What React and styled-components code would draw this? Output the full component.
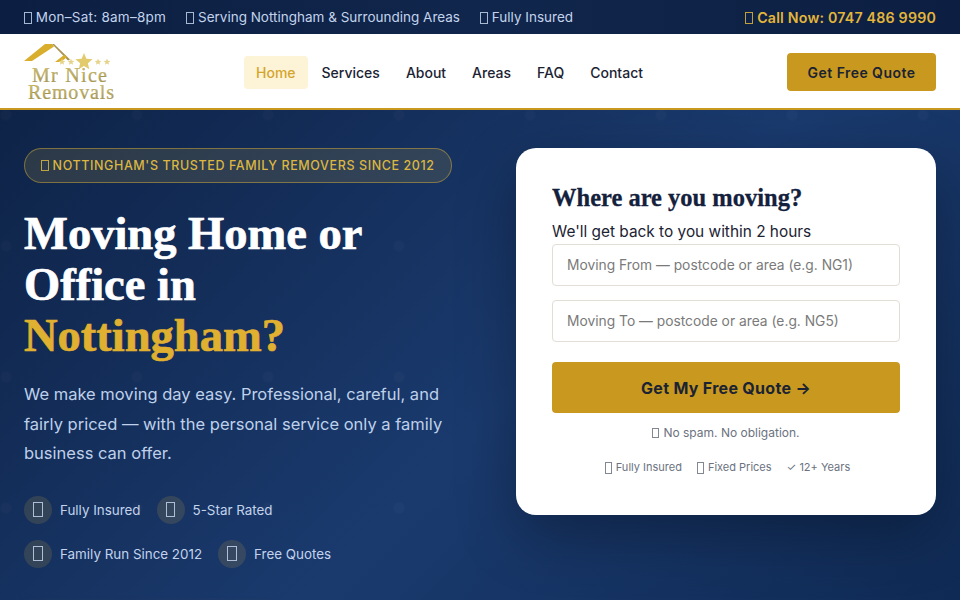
import styled, { createGlobalStyle } from "styled-components";

const GlobalStyle = createGlobalStyle`
  * { box-sizing: border-box; }
  html, body { margin: 0; padding: 0; height: 600px; overflow: hidden; }
  body { font-family: "Inter", "Liberation Sans", sans-serif; color: #14213d; }
`;

// the page's emoji show as empty "missing glyph" boxes
const Glyph = styled.span`
  display: inline-block;
  width: 0.58em;
  height: 0.85em;
  margin-right: ${(p) => (p.$bare ? "0" : "4px")};
  vertical-align: -0.12em;
  border: 1px solid currentColor;
  opacity: 0.85;
`;

const SmallGlyph = styled(Glyph)`
  width: 7px;
  height: 12px;
  vertical-align: -3px;
`;

const TopBar = styled.div`
  height: 34px;
  padding: 0 24px;
  display: flex;
  align-items: center;
  justify-content: space-between;
  background: linear-gradient(90deg, #0c1f42, #11264c 50%, #0c1f42);
  font-size: 13.5px;
  color: #c3d3ec;
`;

const TopLeft = styled.div`
  display: flex;
  gap: 20px;
`;

const TopItem = styled.span`
  letter-spacing: ${(p) => (p.$spread ? "0.25px" : "0")};
`;

const Phone = styled.span`
  color: #e3b53a;
  font-size: 14.2px;
  font-weight: 600;
  letter-spacing: 0.2px;
`;

const Nav = styled.nav`
  height: 76px;
  padding: 2px 24px 0;
  display: flex;
  align-items: center;
  justify-content: space-between;
  background: #fff;
  border-bottom: 2px solid #c9991f;
`;

const Logo = styled.svg`
  width: 92px;
  height: 60px;
  display: block;
`;

const Links = styled.div`
  display: flex;
  gap: 2px;
  margin-right: 4px;
`;

const NavLink = styled.a`
  height: 33px;
  padding: 0 12px;
  display: flex;
  align-items: center;
  border-radius: 4px;
  font-size: 14px;
  font-weight: 500;
  color: ${(p) => (p.$active ? "#d4a52c" : "#1b2333")};
  background: ${(p) => (p.$active ? "#fdf3d7" : "transparent")};
`;

const NavButton = styled.a`
  height: 38px;
  width: 149px;
  display: flex;
  align-items: center;
  justify-content: center;
  border-radius: 4px;
  background: #c9991f;
  color: #1b2333;
  font-size: 14px;
  font-weight: 600;
  letter-spacing: 0.45px;
`;

const Hero = styled.section`
  height: 490px;
  padding: 38px 24px 0;
  display: grid;
  grid-template-columns: 428px 420px;
  justify-content: space-between;
  align-items: start;
  overflow: hidden;
  background-color: #14305f;
  background-image:
    radial-gradient(circle, rgba(255, 255, 255, 0.018) 0 5px, transparent 6px),
    linear-gradient(135deg, #0e2347 0%, #1a3a6e 55%, #0f2a54 100%);
  background-size: 131px 131px, 100% 100%;
  background-position: -59.5px -60.5px, 0 0;
`;

const Badge = styled.div`
  height: 35px;
  display: flex;
  align-items: center;
  justify-content: center;
  border: 1px solid rgba(227, 181, 58, 0.45);
  border-radius: 18px;
  background: rgba(227, 181, 58, 0.14);
  color: #dcb640;
  font-size: 12.5px;
  font-weight: 500;
  letter-spacing: 0.6px;
  white-space: nowrap;
`;

const Title = styled.h1`
  margin: 25px 0 0;
  font-family: "Liberation Serif", serif;
  font-size: 46.5px;
  font-weight: 700;
  line-height: 51px;
  color: #fff;
  -webkit-text-stroke: 0.7px currentColor;
`;

const Gold = styled.span`
  display: block;
  color: #e0b030;
`;

const Lead = styled.p`
  margin: 19px 0 0;
  font-size: 16.5px;
  line-height: 29.5px;
  color: #bfd0ea;
`;

const Perks = styled.div`
  margin-top: 27px;
  display: flex;
  flex-wrap: wrap;
  gap: 16px;
`;

const Perk = styled.div`
  display: flex;
  align-items: center;
  gap: 8px;
  font-size: 13.4px;
  color: #c3d3ec;
`;

const PerkIcon = styled.span`
  width: 28px;
  height: 28px;
  display: flex;
  align-items: center;
  justify-content: center;
  border-radius: 50%;
  background: rgba(227, 181, 58, 0.15);
  font-size: 17px;
`;

const HeroButton = styled.div`
  margin-top: 39px;
  width: 250px;
  height: 50px;
  border-radius: 4px;
  background: #c9991f;
  box-shadow: 0 2px 12px rgba(201, 153, 31, 0.35);
`;

const Card = styled.form`
  height: 367px;
  padding: 36px 36px 0;
  border-radius: 20px;
  background: #fff;
  box-shadow: 0 20px 60px rgba(0, 0, 0, 0.3);
`;

const CardTitle = styled.h2`
  margin: 0;
  font-family: "Liberation Serif", serif;
  font-size: 24.5px;
  font-weight: 700;
  line-height: 28px;
  color: #14213d;
  -webkit-text-stroke: 0.3px currentColor;
`;

const CardSub = styled.p`
  margin: 10px 0 2px;
  font-size: 15.4px;
  line-height: 20px;
  color: #1b2333;
`;

const Field = styled.input`
  display: block;
  width: 100%;
  height: 42px;
  margin-bottom: 14px;
  padding: 0 14px;
  border: 1px solid #e2ded6;
  border-radius: 4px;
  background: #fff;
  font: 13.8px "Inter", sans-serif;
  outline: none;
  &::placeholder { color: #7a7a7a; opacity: 1; }
`;

const Submit = styled.button`
  display: block;
  width: 100%;
  height: 51px;
  margin-top: 20px;
  border: 0;
  border-radius: 4px;
  background: #c9991f;
  color: #1b2333;
  font: 700 16px "Inter", sans-serif;
  letter-spacing: 0.3px;
`;

const Note = styled.p`
  margin: 12px 0 0;
  text-align: center;
  font-size: 12px;
  line-height: 16px;
  color: #6b7280;
`;

const TrustRow = styled.div`
  margin-top: 18px;
  padding-left: 3px;
  display: flex;
  justify-content: center;
  gap: 15px;
  font-size: 11px;
  line-height: 16px;
  color: #6b7280;
`;

const perks = ["Fully Insured", "5-Star Rated", "Family Run Since 2012", "Free Quotes"];

// star polygon centred on cx, cy
function Star({ cx, cy, r, fill }) {
  const points = [];
  for (let i = 0; i < 10; i++) {
    const radius = i % 2 ? r * 0.45 : r;
    const angle = -Math.PI / 2 + (i * Math.PI) / 5;
    points.push(`${cx + radius * Math.cos(angle)},${cy + radius * Math.sin(angle)}`);
  }
  return <polygon points={points.join(" ")} fill={fill} />;
}

function LogoMark() {
  return (
    <Logo viewBox="0 0 92 60">
      <defs>
        <linearGradient id="logoGold" x1="0" y1="0" x2="0" y2="1">
          <stop offset="0" stopColor="#d6c572" />
          <stop offset="0.55" stopColor="#bdae60" />
          <stop offset="1" stopColor="#9c8e4c" />
        </linearGradient>
      </defs>
      <path d="M0 19 L21 2 L28 2 L30 4.5 L8 19 Z" fill="#d9ae2c" />
      <path d="M28 2 L30 2 L46 17.5 L44 18.5 Z" fill="#a89250" />
      <path d="M31 20 L40 13 L43 15 L37 20 Z" fill="#d9ae2c" />
      <Star cx={60} cy={20} r={9} fill="#e2cb6c" />
      <Star cx={38} cy={20} r={3.5} fill="#e6d388" />
      <Star cx={47} cy={20} r={3.5} fill="#e6d388" />
      <Star cx={74} cy={20} r={3.5} fill="#e6d388" />
      <Star cx={83} cy={20} r={3.5} fill="#e6d388" />
      <text x="8" y="39.5" textLength="75" lengthAdjust="spacing" fontFamily="Liberation Serif, serif" fontSize="20" fill="url(#logoGold)" stroke="#8f8240" strokeWidth="0.2">Mr Nice</text>
      <text x="4" y="56.5" textLength="86" lengthAdjust="spacing" fontFamily="Liberation Serif, serif" fontSize="20" fill="url(#logoGold)" stroke="#8f8240" strokeWidth="0.2">Removals</text>
    </Logo>
  );
}

export default function App() {
  return (
    <>
      <GlobalStyle />
      <TopBar>
        <TopLeft>
          <TopItem $spread><Glyph />Mon–Sat: 8am–8pm</TopItem>
          <TopItem><Glyph />Serving Nottingham &amp; Surrounding Areas</TopItem>
          <TopItem><Glyph />Fully Insured</TopItem>
        </TopLeft>
        <Phone><Glyph />Call Now: 0747 486 9990</Phone>
      </TopBar>
      <Nav>
        <LogoMark />
        <Links>
          <NavLink $active>Home</NavLink>
          <NavLink>Services</NavLink>
          <NavLink>About</NavLink>
          <NavLink>Areas</NavLink>
          <NavLink>FAQ</NavLink>
          <NavLink>Contact</NavLink>
        </Links>
        <NavButton>Get Free Quote</NavButton>
      </Nav>
      <Hero>
        <div>
          <Badge><Glyph />NOTTINGHAM'S TRUSTED FAMILY REMOVERS SINCE 2012</Badge>
          <Title>
            Moving Home or<br />Office in<Gold>Nottingham?</Gold>
          </Title>
          <Lead>
            We make moving day easy. Professional, careful, and fairly priced — with the personal service only a family business can offer.
          </Lead>
          <Perks>
            {perks.map((label) => (
              <Perk key={label}>
                <PerkIcon><Glyph $bare /></PerkIcon>
                {label}
              </Perk>
            ))}
          </Perks>
          <HeroButton />
        </div>
        <Card>
          <CardTitle>Where are you moving?</CardTitle>
          <CardSub>We'll get back to you within 2 hours</CardSub>
          <Field placeholder="Moving From — postcode or area (e.g. NG1)" />
          <Field placeholder="Moving To — postcode or area (e.g. NG5)" />
          <Submit type="button">Get My Free Quote →</Submit>
          <Note><Glyph />No spam. No obligation.</Note>
          <TrustRow>
            <span><SmallGlyph />Fully Insured</span>
            <span><SmallGlyph />Fixed Prices</span>
            <span>✓ 12+ Years</span>
          </TrustRow>
        </Card>
      </Hero>
    </>
  );
}
